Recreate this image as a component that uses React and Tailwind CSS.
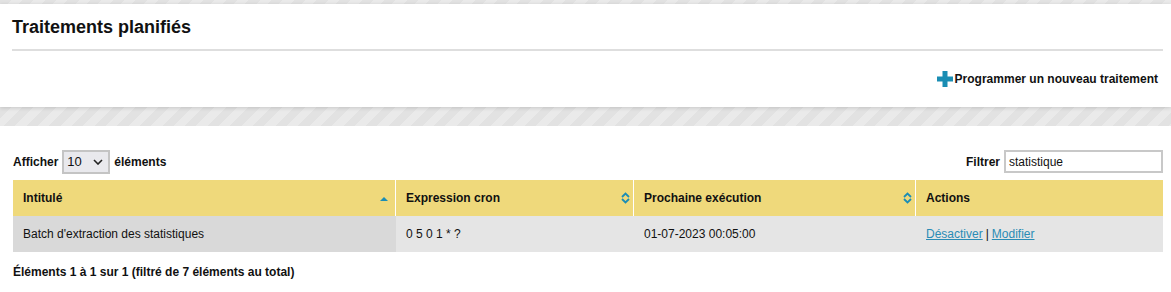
import React from "react";

const stripes =
  "bg-[repeating-linear-gradient(135deg,#e2e2e2_0px,#e2e2e2_8px,#eaeaea_8px,#eaeaea_16px)]";

function SortAsc() {
  return (
    <svg width="8" height="5" viewBox="0 0 8 5" className="shrink-0">
      <path d="M0 5 L4 1 L8 5 Z" fill="#1b8db5" />
    </svg>
  );
}

function SortBoth() {
  return (
    <svg width="9" height="12" viewBox="0 0 9 12" className="shrink-0">
      <path d="M1 5 L4.5 1.5 L8 5" fill="none" stroke="#1b8db5" strokeWidth="1.8" />
      <path d="M1 7 L4.5 10.5 L8 7" fill="none" stroke="#1b8db5" strokeWidth="1.8" />
    </svg>
  );
}

function Plus() {
  return (
    <svg width="16" height="16" viewBox="0 0 16 16" className="shrink-0">
      <rect x="5.5" y="0" width="5" height="16" fill="#1a8db3" />
      <rect x="0" y="5.5" width="16" height="5" fill="#1a8db3" />
    </svg>
  );
}

export default function App() {
  return (
    <div className="w-[1171px] h-[292px] bg-white font-['Liberation_Sans',Arial,sans-serif] text-[#111] overflow-hidden">
      <div className={`h-[4px] ${stripes}`} />
      <div className="relative z-10 bg-white shadow-[0_1px_4px_rgba(0,0,0,0.15)] px-[12px]">
        <div className="h-[45px] flex items-center pt-[1px]">
          <h1 className="text-[18px] font-bold leading-none">Traitements planifiés</h1>
        </div>
        <div className="h-[2px] bg-[#dedede] mr-[-4px]" />
        <div className="h-[56px] flex items-center justify-end pr-[1px] pb-[1px]">
          <a className="flex items-center gap-[2px] text-[12px] font-bold text-[#111] cursor-pointer">
            <Plus />
            <span>Programmer un nouveau traitement</span>
          </a>
        </div>
      </div>
      <div className={`h-[19px] ${stripes}`} />
      <div className="px-[13px] pt-[23px] pr-[8px]">
        <div className="flex items-center justify-between h-[25px] text-[12px] font-bold">
          <div className="flex items-center gap-[4px]">
            <span>Afficher</span>
            <div className="w-[48px] h-[24px] border-2 border-[#c4c4c4] bg-[#e9e9ed] flex items-center justify-between pl-[3px] pr-[5px] font-normal text-[13px]">
              <span>10</span>
              <svg width="10" height="6" viewBox="0 0 10 6">
                <path d="M1 1 L5 5 L9 1" fill="none" stroke="#222" strokeWidth="1.6" />
              </svg>
            </div>
            <span>éléments</span>
          </div>
          <div className="flex items-center gap-[4px]">
            <span>Filtrer</span>
            <div className="w-[159px] h-[23px] border-2 border-[#c8c8c8] bg-white flex items-center pl-[3px] font-normal text-[12px]">
              statistique
            </div>
          </div>
        </div>
        <div className="mt-[6px] w-[1150px]">
          <div className="flex h-[36px] bg-[#efd97b] text-[12px] font-bold">
            <div className="w-[383px] flex items-center justify-between pl-[10px] pr-[7px] border-r border-white">
              <span>Intitulé</span>
              <SortAsc />
            </div>
            <div className="w-[238px] flex items-center justify-between pl-[10px] pr-[3px] border-r border-white">
              <span>Expression cron</span>
              <SortBoth />
            </div>
            <div className="w-[282px] flex items-center justify-between pl-[10px] pr-[3px] border-r border-white">
              <span>Prochaine exécution</span>
              <SortBoth />
            </div>
            <div className="flex-1 flex items-center pl-[10px]">
              <span>Actions</span>
            </div>
          </div>
          <div className="flex h-[36px] text-[12px]">
            <div className="w-[383px] flex items-center pl-[10px] bg-[#d9d9d9] border-r border-[#d9d9d9]">
              Batch d'extraction des statistiques
            </div>
            <div className="w-[238px] flex items-center pl-[10px] bg-[#e5e5e5] border-r border-[#e5e5e5]">
              0 5 0 1 * ?
            </div>
            <div className="w-[282px] flex items-center pl-[10px] bg-[#e5e5e5] border-r border-[#e5e5e5]">
              01-07-2023 00:05:00
            </div>
            <div className="flex-1 flex items-center pl-[10px] bg-[#e5e5e5]">
              <a className="text-[#2a8cb5] underline cursor-pointer">Désactiver</a>
              <span className="mx-[3px]">|</span>
              <a className="text-[#2a8cb5] underline cursor-pointer">Modifier</a>
            </div>
          </div>
        </div>
        <div className="mt-[11px] text-[12px] font-bold">
          Éléments 1 à 1 sur 1 (filtré de 7 éléments au total)
        </div>
      </div>
    </div>
  );
}
